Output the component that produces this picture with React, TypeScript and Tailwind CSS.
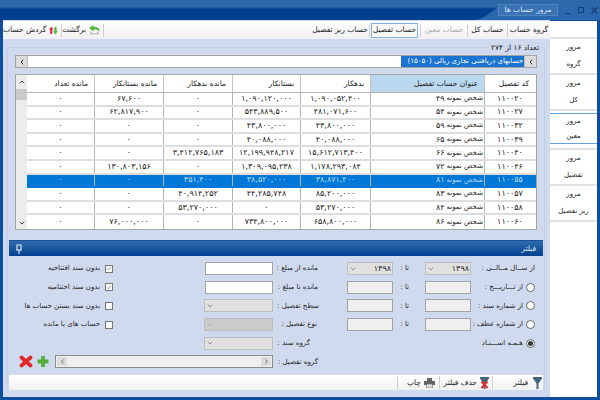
import React from "react";
import { ChevronDown, ChevronUp, ChevronLeft, ChevronRight, Check } from "lucide-react";

const rows = [
  ["۱۱۰۰۲۰", "۴۹", "۱,۰۹۰,۰۵۲,۴۰۰", "۱,۰۹۰,۱۲۰,۰۰۰", "۰", "۶۷,۶۰۰", "۰"],
  ["۱۱۰۰۲۷", "۵۴", "۴۸۱,۰۷۱,۶۰۰", "۵۴۳,۸۸۹,۵۰۰", "۰", "۶۲,۸۱۷,۹۰۰", "۰"],
  ["۱۱۰۰۳۲", "۵۹", "۴۳,۸۰۰,۰۰۰", "۴۳,۸۰۰,۰۰۰", "۰", "۰", "۰"],
  ["۱۱۰۰۳۹", "۶۵", "۴۰,۰۸۸,۰۰۰", "۴۰,۰۸۸,۰۰۰", "۰", "۰", "۰"],
  ["۱۱۰۰۴۰", "۶۶", "۱۵,۶۱۲,۷۱۳,۴۰۰", "۱۲,۱۹۹,۹۴۸,۲۱۷", "۳,۴۱۲,۷۶۵,۱۸۳", "۰", "۰"],
  ["۱۱۰۰۴۶", "۷۲", "۱,۱۷۸,۲۹۳,۰۸۴", "۱,۳۰۹,۰۹۵,۲۳۸", "۰", "۱۳۰,۸۰۳,۱۵۶", "۰"],
  ["۱۱۰۰۵۵", "۸۱", "۳۸,۸۷۱,۴۰۰", "۳۸,۵۲۰,۰۰۰", "۳۵۱,۴۰۰", "۰", "۰"],
  ["۱۱۰۰۵۷", "۸۳", "۸۵,۲۰۰,۰۰۰", "۴۴,۲۸۵,۷۴۸", "۴۰,۹۱۴,۲۵۲", "۰", "۰"],
  ["۱۱۰۰۵۸", "۸۴", "۵۳,۲۷۰,۰۰۰", "۰", "۵۳,۲۷۰,۰۰۰", "۰", "۰"],
  ["۱۱۰۰۶۰", "۸۶", "۶۵۸,۸۰۰,۰۰۰", "۷۳۴,۸۰۰,۰۰۰", "۰", "۷۶,۰۰۰,۰۰۰", "۰"],
];

const colW = ["w-[68px]", "w-[69px]", "w-[69px]", "w-[68px]", "w-[70px]", "w-[114px]", "w-[50px]"];

const Field = ({ white }: { white?: boolean }) => (
  <div className={`h-[13px] shrink-0 border border-[#a3a3a3] ${white ? "w-[68px] bg-white" : "w-[46px] bg-[#efefef]"}`} />
);

const Sel = ({ value, dark, wide }: { value?: string; dark?: boolean; wide?: boolean }) => (
  <div className={`h-[13px] shrink-0 flex items-center justify-between px-[1px] border border-[#bdbdbd] ${wide ? "w-[69px]" : "w-[46px]"} ${dark ? "bg-[#cbcbcb]" : "bg-[#e0e0e0]"}`}>
    <ChevronDown size={8} color={dark ? "#aaa" : "#666"} />
    <span className="text-[8px] text-[#222]">{value}</span>
  </div>
);

const Chk = ({ label, on }: { label: string; on?: boolean }) => (
  <div className="w-[104px] flex justify-end items-center gap-[5px]">
    <span dir="rtl" className="text-[7px] text-[#222] whitespace-nowrap">{label}</span>
    <div className="w-[8px] h-[8px] shrink-0 border border-[#777] bg-white flex items-center justify-center">
      {on && <Check size={7} color="#444" strokeWidth={2} />}
    </div>
  </div>
);

const Lbl = ({ t, w }: { t: string; w: string }) => (
  <div dir="rtl" className={`${w} shrink-0 text-[7px] text-[#222] whitespace-nowrap`}>{t}</div>
);

const Radio = ({ on }: { on?: boolean }) => (
  <div className="w-[9px] h-[9px] rounded-full border border-[#666] bg-white flex items-center justify-center">
    {on && <div className="w-[5px] h-[5px] rounded-full bg-[#333]" />}
  </div>
);

const To = () => <div dir="rtl" className="w-[32px] shrink-0 pr-[16px] text-[7px] text-[#222]">تا :</div>;

const Tail = ({ label, on, mid }: { label: string; on?: boolean; mid?: boolean }) => (
  <div className="flex items-center">
    {mid ? (
      <>
        <Field />
        <To />
        <Field />
      </>
    ) : null}
    <div dir="rtl" className="w-[53px] shrink-0 text-[7px] text-[#222] whitespace-nowrap pr-[1px]">{label}</div>
    <div className="w-[13px] shrink-0 flex justify-center"><Radio on={on} /></div>
  </div>
);

const Funnel = ({ x }: { x?: boolean }) => (
  <svg width="9" height="12" viewBox="0 0 9 12">
    <path d="M0 0h9v1.500L5.500 6.500V12h-2V6.500L0 1.500z" fill="#45657f" />
    {x && <path d="M1.500 4.500l6 6.500M7.500 4.500l-6 6.500" stroke="#e03030" strokeWidth="2" />}
  </svg>
);

const SideBtn = ({ a, b, active }: { a: string; b: string; active?: boolean }) => (
  <div className={`flex flex-col items-center justify-around text-[7px] text-[#222] ${active ? "h-[31px] my-[2px] border-y border-[#6aa3dc]" : "h-[36px] border-b-2 border-[#e2e2e2]"}`}>
    <span>{a}</span>
    <span>{b}</span>
  </div>
);

const Tab = ({ t, cls }: { t: string; cls: string }) => (
  <div dir="rtl" className={`h-[15px] flex items-center justify-center whitespace-nowrap text-[7.5px] ${cls}`}>{t}</div>
);

const Sep = () => <div className="w-px h-[13px] shrink-0 bg-[#cfcfcf]" />;

const Cell = ({ t, w, children }: { t: string; w: string; children: React.ReactNode }) => (
  <div className={`${w} flex items-center justify-end gap-[3px] pr-[3px]`}>
    <span dir="rtl" className="text-[7.5px] text-[#222] whitespace-nowrap">{t}</span>
    {children}
  </div>
);

export default function App() {
  return (
    <div
      dir="ltr"
      className="w-[600px] h-[400px] overflow-hidden flex flex-col bg-[#0d4f9e]"
      style={{ fontFamily: '"DejaVu Sans", sans-serif' }}
    >
      {/* title bar */}
      <div className="relative h-[20px] shrink-0 bg-gradient-to-b from-[#2f68a9] from-[35%] to-[#00408f] to-[45%] flex items-center justify-end">
        <svg className="absolute right-0 top-0" width="125" height="20" viewBox="0 0 125 20">
          <defs>
            <linearGradient id="tb" x1="0" y1="0" x2="0" y2="1">
              <stop offset="0" stopColor="#2f68a9" />
              <stop offset="1" stopColor="#2a68ae" />
            </linearGradient>
          </defs>
          <path d="M0 20C15 18 22 3 38 0H125V20z" fill="url(#tb)" />
        </svg>
        <div className="relative flex items-center">
          <div className="w-[60px] h-[12px] mr-[7px] bg-[#3a73b3] border border-[#4f84bf] flex items-center justify-center text-[7.5px] text-[#dbe6f4]">
            <span dir="rtl">مرور حساب ها</span>
          </div>
          <div className="w-[33px] mr-[2px] flex items-center justify-between">
            <div className="w-[5px] h-[1px] mt-[6px] bg-[#0f3d78]" />
            <div className="w-[6px] h-[6px] border border-[#0f3d78]" />
            <svg width="7" height="7" viewBox="0 0 7 7"><path d="M.5.5l6 6M6.5.5l-6 6" stroke="#0f3d78" strokeWidth="1.200" /></svg>
          </div>
        </div>
      </div>

      <div className="flex-1 flex ml-[3px] mr-[3px] mb-[3px] min-h-0">
        {/* main */}
        <div className="w-[547px] flex flex-col bg-[#d0daee]">
          {/* toolbar */}
          <div className="h-[18px] mt-[1px] shrink-0 bg-gradient-to-b from-white to-[#f1f1f1] flex items-center justify-between">
            <div className="flex items-center">
              <Cell t="گردش حساب" w="w-[58px]">
                <svg width="11" height="11" viewBox="0 0 11 11">
                  <path d="M2.800 .5L6 4.500H4.200V10H1.400V4.500H0z" fill="#e8324a" />
                  <path d="M8.200 10.500L5 6.500H6.800V1H9.600V6.500H11z" fill="#55b83c" />
                </svg>
              </Cell>
              <Sep />
              <Cell t="برگشت" w="w-[41px]">
                <svg width="11" height="10" viewBox="0 0 11 10">
                  <path d="M1 6c2 3 7 3 9 0v3.500H1z" fill="#bdbdbd" />
                  <path d="M0 3l4.500-3v1.800c3 0 6 1 6.500 4.700C9 4.800 6.500 4.500 4.500 4.600v2z" fill="#56b83a" />
                </svg>
              </Cell>
              <Sep />
            </div>
            <div className="flex items-center">
              <Tab t="حساب ریز تفصیل" cls="w-[58px] text-[#222]" />
              <Sep />
              <div className="w-[1px]" />
              <Tab t="حساب تفصیل" cls="w-[47px] border border-[#7fb2e0] bg-[#f7f7f7] text-[#222]" />
              <div className="w-[2px]" />
              <Sep />
              <Tab t="حساب معین" cls="w-[46px] text-[#aaa]" />
              <Sep />
              <Tab t="حساب کل" cls="w-[39px] text-[#222]" />
              <Sep />
              <Tab t="گروه حساب" cls="w-[42px] text-[#222]" />
            </div>
          </div>

          {/* group box */}
          <div className="relative mt-[8px] ml-[4px] mr-[5px] h-[343px] border border-[#c2cee6] flex flex-col">
            <div dir="rtl" className="absolute right-[3px] -top-[5px] px-[2px] bg-[#d0daee] text-[7.5px] leading-[10px] text-[#222]">تعداد ۱۶ از ۲۷۴</div>

            {/* path bar */}
            <div className="mt-[7px] mx-[7px] h-[13px] shrink-0 flex items-stretch bg-white border border-[#a5a5a5]">
              <div className="w-[12px] bg-[#dcdcdc] border-r border-[#bbb] flex items-center justify-center"><ChevronLeft size={8} color="#333" strokeWidth={3} /></div>
              <div className="flex-1" />
              <div dir="rtl" className="w-[123px] bg-[#1a73d0] text-white text-[7px] flex items-center px-[1px] whitespace-nowrap">حسابهای دریافتنی تجاری ریالی (۱۵۰۵۰)</div>
              <div className="w-[12px] bg-[#dcdcdc] border-l border-[#bbb] flex items-center justify-center"><ChevronLeft size={8} color="#333" strokeWidth={3} /></div>
            </div>

            {/* table */}
            <div className="mt-[6px] mx-[7px] h-[156px] shrink-0 flex bg-white border border-[#a5a5a5]">
              <div className="w-[11px] shrink-0 bg-[#ececec] flex flex-col items-center">
                <div className="h-[14px] flex items-center"><ChevronUp size={8} color="#444" strokeWidth={3} /></div>
                <div className="w-full h-[11px] bg-[#c9c9c9]" />
                <div className="flex-1" />
                <div className="h-[12px] flex items-center"><ChevronDown size={8} color="#444" strokeWidth={3} /></div>
              </div>
              <div className="flex-1 flex flex-col text-[8px] text-[#222]">
                <div className="h-[18px] shrink-0 flex border-b border-[#b5b5b5]">
                  {["مانده تعداد", "مانده بستانکار", "مانده بدهکار", "بستانکار", "بدهکار", "عنوان حساب تفصیل", "کد تفصیل"].map((h, i) => (
                    <div key={h} dir="rtl" className={`${colW[i]} shrink-0 flex items-center px-[6px] text-[7.5px] whitespace-nowrap ${i < 6 ? "border-r border-[#c4c4c4]" : ""} ${i === 5 ? "bg-[#b9d7ef]" : ""}`}>{h}</div>
                  ))}
                </div>
                {rows.map((r, idx) => {
                  const sel = idx === 6;
                  const order = [r[6], r[5], r[4], r[3], r[2], r[1], r[0]];
                  return (
                    <div key={r[0]} className={`h-[13.7px] flex ${idx === 9 ? "" : "border-b-2"} ${sel ? "bg-[#0078d7] text-[#bcd8f5] border-[#0078d7]" : "border-[#dddddd]"}`}>
                      {order.map((c, i) => (
                        <div key={i} dir="rtl" className={`${colW[i]} shrink-0 flex items-center whitespace-nowrap leading-none ${i === 5 ? "justify-start px-[1px] gap-[2px]" : "justify-center"} ${i < 6 ? "border-r border-[#b5b5b5]" : ""}`}>
                          {i === 5 ? <span className="text-[7px]">شخص نمونه</span> : null}
                          {c}
                        </div>
                      ))}
                    </div>
                  );
                })}
              </div>
            </div>

            {/* filter header */}
            <div className="mt-[10px] mx-[1px] h-[16px] shrink-0 bg-gradient-to-b from-[#2f6bad] to-[#004090] border-t border-[#1b5199] flex items-center justify-between px-[7px]">
              <svg width="6" height="10" viewBox="0 0 6 10">
                <path d="M1 1h4v5H1zM0 6h6M3 6v4" fill="none" stroke="#e8eef8" strokeWidth="1.100" />
              </svg>
              <span dir="rtl" className="text-[7.5px] text-[#dde7f5]">فیلتر</span>
            </div>

            {/* filter form */}
            <div className="h-[119px] shrink-0 mx-[1px] pt-[6px] flex flex-col gap-[5.7px]">
              <div className="h-[13px] flex items-center">
                <div className="w-[264px] shrink-0 flex items-center justify-between">
                  <Chk label="بدون سند افتتاحیه" on />
                  <Field white />
                </div>
                <Lbl t="مانده از مبلغ :" w="w-[47px] pr-[2px]" />
                <div className="w-[27px] shrink-0" />
                <Sel value="۱۳۹۸" />
                <To />
                <Sel value="۱۳۹۸" />
                <div dir="rtl" className="w-[66px] shrink-0 text-[7px] text-[#222] whitespace-nowrap pr-[2px]">از ســال مــالــی :</div>
              </div>
              <div className="h-[13px] flex items-center">
                <div className="w-[264px] shrink-0 flex items-center justify-between">
                  <Chk label="بدون سند اختتامیه" on />
                  <Field white />
                </div>
                <Lbl t="مانده تا مبلغ :" w="w-[47px] pr-[2px]" />
                <div className="w-[27px] shrink-0" />
                <Tail mid label="از تـــاریـــخ :" />
              </div>
              <div className="h-[13px] flex items-center">
                <div className="w-[264px] shrink-0 flex items-center justify-between">
                  <Chk label="بدون سند بستن حساب ها" />
                  <Sel wide />
                </div>
                <Lbl t="سطح تفصیل :" w="w-[47px] pr-[1px]" />
                <div className="w-[27px] shrink-0" />
                <Tail mid label="از شماره سند :" />
              </div>
              <div className="h-[13px] flex items-center">
                <div className="w-[264px] shrink-0 flex items-center justify-between">
                  <Chk label="حساب های با مانده" />
                  <Sel wide dark />
                </div>
                <Lbl t="نوع تفصیل :" w="w-[47px] pr-[3px]" />
                <div className="w-[27px] shrink-0" />
                <Tail mid label="از شماره عطف :" />
              </div>
              <div className="h-[13px] flex items-center">
                <div className="w-[264px] shrink-0 flex justify-end">
                  <Sel wide />
                </div>
                <Lbl t="گروه سند :" w="w-[47px] pr-[10px]" />
                <div className="w-[151px] shrink-0" />
                <Tail label="هـمـه اســـنـاد" on />
              </div>
              <div className="h-[13px] flex items-center">
                <div className="w-[264px] shrink-0 flex items-center pl-[10px]">
                  <svg width="14" height="13" viewBox="0 0 14 13"><path d="M2.500 2.500l9 8M11.500 2.500l-9 8" stroke="#e02a2a" strokeWidth="3.800" strokeLinecap="round" /></svg>
                  <svg className="ml-[4px]" width="12" height="13" viewBox="0 0 12 13"><path d="M6 1v11M.5 6.500h11" stroke="#55b03a" strokeWidth="3.800" /></svg>
                  <div className="ml-[6px] w-[218px] h-[13px] bg-[#efefef] border border-[#8c8c8c] flex justify-between p-[1px]">
                    <div className="w-[10px] bg-[#dcdcdc] flex items-center justify-center"><ChevronLeft size={7} color="#555" strokeWidth={3} /></div>
                    <div className="w-[10px] bg-[#dcdcdc] flex items-center justify-center"><ChevronRight size={7} color="#555" strokeWidth={3} /></div>
                  </div>
                </div>
                <Lbl t="گروه تفصیل :" w="w-[47px] pr-[2px]" />
              </div>
            </div>

            {/* bottom strip */}
            <div className="h-[15px] shrink-0 mx-[1px] bg-gradient-to-b from-white to-[#f1f1f1] flex items-center justify-end">
              <Sep />
              <Cell t="چاپ" w="w-[41px]">
                <svg className="mr-[1px]" width="11" height="10" viewBox="0 0 11 10">
                  <path d="M3 0h5v3H3zM0 3h11v4H0z" fill="#666" />
                  <path d="M2.500 6h6v4h-6z" fill="#ddd" stroke="#666" strokeWidth=".6" />
                </svg>
              </Cell>
              <Sep />
              <Cell t="حذف فیلتر" w="w-[52px]"><Funnel x /></Cell>
              <Sep />
              <div className="w-[50px] flex items-center justify-end gap-[5px] pr-[1px]">
                <span dir="rtl" className="text-[7.5px] text-[#222]">فیلتر</span>
                <Funnel />
              </div>
            </div>
          </div>
        </div>

        {/* sidebar */}
        <div className="flex-1 mt-[1px] bg-white pt-[16px] flex flex-col">
          <div className="border-t-2 border-[#e2e2e2]" />
          <SideBtn a="مرور" b="گروه" />
          <SideBtn a="مرور" b="کل" />
          <SideBtn a="مرور" b="معین" active />
          <div className="border-t-2 border-[#e2e2e2] mt-[2px]" />
          <SideBtn a="مرور" b="تفصیل" />
          <SideBtn a="مرور" b="ریز تفصیل" />
        </div>
      </div>
    </div>
  );
}
